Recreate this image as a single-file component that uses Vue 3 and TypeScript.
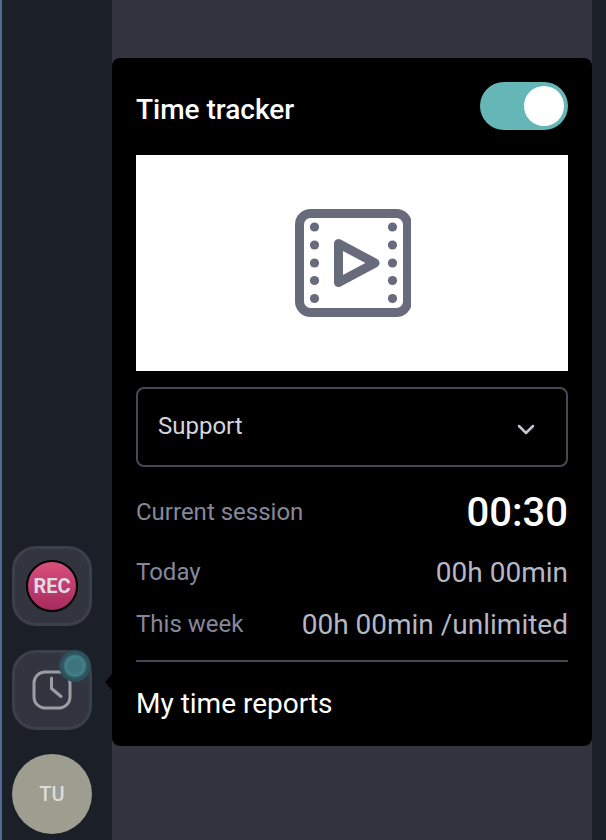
<script setup lang="ts">
interface Stat {
  label: string
  value: string
}

const stats: Stat[] = [
  { label: 'Today', value: '00h 00min' },
  { label: 'This week', value: '00h 00min /unlimited' },
]

const holesY = [227, 245, 263, 280.5, 298.5]
</script>

<template>
  <div class="page">
    <aside class="sidebar">
      <button class="side-btn">
        <span class="rec">REC</span>
      </button>
      <button class="side-btn">
        <svg width="44" height="44" viewBox="0 0 44 44" fill="none" stroke="#9c9da3" stroke-width="3" stroke-linecap="round">
          <rect x="4" y="4" width="36" height="36" rx="11" />
          <path d="M21.500 10V20.500L31 28.500" />
        </svg>
        <span class="pulse"></span>
      </button>
      <div class="avatar">TU</div>
    </aside>
    <main class="main">
      <section class="panel">
        <span class="arrow"></span>
        <header class="head">
          <h2>Time tracker</h2>
          <span class="toggle"><span class="knob"></span></span>
        </header>
        <div class="preview">
          <svg width="118" height="110" viewBox="293 208 118 110" fill="none">
            <rect x="299.500" y="213.500" width="108" height="99" rx="11" stroke="#686b7c" stroke-width="9" />
            <circle v-for="y in holesY" :key="'l' + y" cx="314.500" :cy="y" r="4.600" fill="#686b7c" />
            <circle v-for="y in holesY" :key="'r' + y" cx="392.500" :cy="y" r="4.600" fill="#686b7c" />
            <path d="M338.500 243.500V282.500L375 263Z" stroke="#686b7c" stroke-width="9" stroke-linejoin="round" />
          </svg>
        </div>
        <div class="select">
          <span>Support</span>
          <svg class="chevron" width="18" height="12" viewBox="0 0 18 12" fill="none" stroke="#c5c7d0" stroke-width="2.500" stroke-linecap="round" stroke-linejoin="round">
            <path d="M2 2L9 9L16 2" />
          </svg>
        </div>
        <div class="row session">
          <span class="label">Current session</span>
          <span class="timer">00:30</span>
        </div>
        <div v-for="s in stats" :key="s.label" class="row stat">
          <span class="label">{{ s.label }}</span>
          <span class="value">{{ s.value }}</span>
        </div>
        <div class="reports">My time reports</div>
      </section>
    </main>
    <div class="edge"></div>
  </div>
</template>

<style>
html,
body {
  margin: 0;
  background: #1b1f27;
}
</style>

<style scoped>
.page {
  display: flex;
  width: 606px;
  height: 840px;
  overflow: hidden;
  font-family: Roboto, "Liberation Sans", sans-serif;
}

.sidebar {
  width: 112px;
  flex: none;
  box-sizing: border-box;
  border-left: 2px solid #4f6a94;
  background: #1b1f27;
  display: flex;
  flex-direction: column;
  justify-content: flex-end;
  gap: 24px;
  padding: 0 0 6px 10px;
}

.side-btn {
  position: relative;
  width: 80px;
  height: 80px;
  box-sizing: border-box;
  padding: 0;
  border: 3px solid #3c3f4c;
  border-radius: 24px;
  background: #323440;
  display: flex;
  align-items: center;
  justify-content: center;
}

.rec {
  width: 52px;
  height: 52px;
  box-sizing: border-box;
  border: 2px solid #000;
  border-radius: 50%;
  background: linear-gradient(180deg, #d94f7c, #a82a60);
  color: #e0dde2;
  font-size: 20px;
  font-weight: 700;
  font-family: Roboto, sans-serif;
  display: flex;
  align-items: center;
  justify-content: center;
}

.pulse {
  position: absolute;
  top: -3px;
  right: -2px;
  width: 32px;
  height: 32px;
  border-radius: 50%;
  background: radial-gradient(circle closest-side, #3c747b 0, #3c747b 35%, #428189 62%, #2f5863 74%, #2c4b56 100%);
}

.avatar {
  width: 80px;
  height: 80px;
  border-radius: 50%;
  background: #9d9d90;
  color: #dcdcd8;
  font-size: 20px;
  font-weight: 500;
  display: flex;
  align-items: center;
  justify-content: center;
}

.main {
  flex: none;
  width: 480px;
  background: #323440;
  padding-top: 58px;
  box-sizing: border-box;
}

.edge {
  flex: 1;
  background: #1b1f27;
}

.panel {
  position: relative;
  width: 480px;
  height: 688px;
  box-sizing: border-box;
  padding: 24px;
  background: #000;
  border-radius: 8px;
}

.arrow {
  position: absolute;
  left: -7px;
  top: 616px;
  width: 0;
  height: 0;
  border-top: 8px solid transparent;
  border-bottom: 8px solid transparent;
  border-right: 7px solid #000;
}

.head {
  display: flex;
  align-items: center;
  justify-content: space-between;
  height: 48px;
  margin-bottom: 25px;
}

h2 {
  margin: 6px 0 0;
  color: #fff;
  font-size: 28px;
  font-weight: 500;
}

.toggle {
  width: 88px;
  height: 48px;
  box-sizing: border-box;
  padding: 4px;
  border-radius: 24px;
  background: #65b7b7;
  display: flex;
  justify-content: flex-end;
}

.knob {
  width: 40px;
  height: 40px;
  border-radius: 50%;
  background: #fff;
}

.preview {
  height: 216px;
  background: #fff;
  display: flex;
  align-items: center;
  justify-content: center;
}

.select {
  margin-top: 16px;
  height: 80px;
  box-sizing: border-box;
  border: 2px solid #464855;
  border-radius: 8px;
  padding: 0 31px 2px 20px;
  display: flex;
  align-items: center;
  justify-content: space-between;
  color: #d4d5dc;
  font-size: 24px;
}

.chevron {
  margin-top: 8px;
}

.row {
  display: flex;
  align-items: center;
  justify-content: space-between;
}

.session {
  margin-top: 21px;
  height: 48px;
}

.stat {
  height: 36px;
  margin-top: 18px;
}

.stat + .stat {
  margin-top: 16px;
}

.label {
  color: #85889c;
  font-size: 24px;
}

.timer {
  color: #fff;
  font-size: 40px;
  font-weight: 500;
}

.value {
  color: #b4b7c4;
  font-size: 28px;
}

.reports {
  margin-top: 18px;
  border-top: 2px solid #464855;
  padding-top: 25px;
  color: #fff;
  font-size: 28px;
}
</style>
